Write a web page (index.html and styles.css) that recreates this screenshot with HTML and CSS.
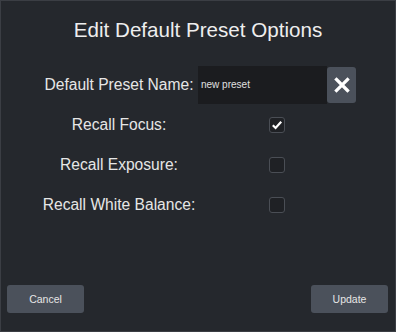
FILE: index.html
```html
<!DOCTYPE html>
<html>
<head>
<meta charset="utf-8">
<link rel="stylesheet" href="styles.css">
</head>
<body>
<div class="dialog">
  <h1 class="title">Edit Default Preset Options</h1>
  <div class="form">
    <div class="row name-row">
      <div class="label">Default Preset Name:</div>
      <div class="control name-control">
        <div class="input">new preset</div>
        <button class="clear" aria-label="Clear">
          <svg width="16" height="16" viewBox="0 0 16 16"><path d="M2.5 2.5 L13.5 13.5 M13.5 2.5 L2.5 13.5" stroke="#ffffff" stroke-width="3.2" stroke-linecap="square"/></svg>
        </button>
      </div>
    </div>
    <div class="row">
      <div class="label">Recall Focus:</div>
      <div class="control"><span class="check checked"><svg width="12" height="12" viewBox="0 0 12 12"><path d="M1.8 6.2 L4.6 9 L10.2 2.8" fill="none" stroke="#ffffff" stroke-width="2.2"/></svg></span></div>
    </div>
    <div class="row">
      <div class="label">Recall Exposure:</div>
      <div class="control"><span class="check"></span></div>
    </div>
    <div class="row">
      <div class="label">Recall White Balance:</div>
      <div class="control"><span class="check"></span></div>
    </div>
  </div>
  <div class="footer">
    <button class="btn">Cancel</button>
    <button class="btn">Update</button>
  </div>
</div>
</body>
</html>
```
FILE: styles.css
```css
html, body {
  margin: 0;
  padding: 0;
  background: #25282d;
}
body {
  width: 396px;
  height: 332px;
  font-family: "Liberation Sans", Arial, sans-serif;
  color: #e8e8e8;
}
.dialog {
  box-sizing: border-box;
  width: 396px;
  height: 332px;
  border: 1px solid #3b3e44;
  background: #25282d;
  display: flex;
  flex-direction: column;
}
.title {
  margin: 0;
  padding-top: 17px;
  height: 46px;
  box-sizing: border-box;
  font-size: 20.6px;
  font-weight: normal;
  text-align: center;
  line-height: 24px;
  color: #eeeeee;
}
.form {
  display: flex;
  flex-direction: column;
  padding-left: 39px;
  margin-top: 19px;
}
.row {
  display: flex;
  align-items: center;
  height: 40px;
}
.name-row {
  height: 38px;
  margin-bottom: 1px;
}
.label {
  width: 158px;
  text-align: center;
  font-size: 15.6px;
  color: #e6e6e6;
}
.control {
  width: 158px;
  display: flex;
  justify-content: center;
  align-items: center;
}
.name-control {
  justify-content: flex-start;
  align-items: center;
}
.input {
  width: 129px;
  height: 38px;
  box-sizing: border-box;
  background: #1b1c1f;
  font-size: 10px;
  line-height: 38px;
  padding-left: 3px;
  color: #e0e0e0;
}
.clear {
  width: 29px;
  height: 36px;
  border: none;
  border-radius: 3px;
  background: #4b515b;
  display: flex;
  align-items: center;
  justify-content: center;
  padding: 0;
  margin-left: 0;
}
.check {
  width: 16px;
  height: 16px;
  box-sizing: border-box;
  border: 1px solid #4a4e55;
  border-radius: 3px;
  background: #1f2125;
  display: flex;
  align-items: center;
  justify-content: center;
}
.footer {
  margin-top: auto;
  display: flex;
  justify-content: space-between;
  padding: 0 7px 18px 6px;
}
.btn {
  width: 77px;
  height: 28px;
  border: none;
  border-radius: 3px;
  background: #4b515b;
  color: #e6e6e6;
  font-family: "Liberation Sans", Arial, sans-serif;
  font-size: 10.5px;
  padding: 0;
}
```
